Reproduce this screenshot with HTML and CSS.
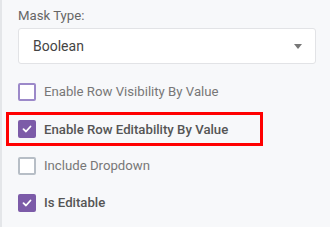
FILE: index.html
```html
<!DOCTYPE html>
<html>
<head>
<meta charset="utf-8">
<link rel="stylesheet" href="styles.css">
</head>
<body>
<div class="panel">
  <div class="field-label">Mask Type:</div>
  <div class="select">
    <span class="select-value">Boolean</span>
    <span class="caret"></span>
  </div>
  <div class="options">
    <div class="row">
      <span class="cb"></span>
      <span class="text">Enable Row Visibility By Value</span>
    </div>
    <div class="row">
      <div class="highlight">
        <span class="cb checked"><svg width="10" height="8" viewBox="0 0 10 8"><path d="M1.5 4.2 L4 6.5 L8.5 1.5" fill="none" stroke="#fff" stroke-width="1.8" stroke-linecap="round" stroke-linejoin="round"/></svg></span>
        <span class="text strong">Enable Row Editability By Value</span>
      </div>
    </div>
    <div class="row">
      <span class="cb grey"></span>
      <span class="text">Include Dropdown</span>
    </div>
    <div class="row">
      <span class="cb checked"><svg width="10" height="8" viewBox="0 0 10 8"><path d="M1.5 4.2 L4 6.5 L8.5 1.5" fill="none" stroke="#fff" stroke-width="1.8" stroke-linecap="round" stroke-linejoin="round"/></svg></span>
      <span class="text strong">Is Editable</span>
    </div>
  </div>
</div>
</body>
</html>
```
FILE: styles.css
```css
html, body {
  margin: 0;
  padding: 0;
}
body {
  width: 330px;
  height: 227px;
  background: #f7f8fa;
  border-left: 2px solid #e4e6e9;
  box-sizing: border-box;
  font-family: Roboto, "Noto Sans", sans-serif;
  overflow: hidden;
}
.panel {
  padding: 8px 14px 0 16px;
}
.field-label {
  font-size: 13.2px;
  line-height: 16px;
  color: #666;
}
.select {
  margin-top: 4px;
  height: 36px;
  box-sizing: border-box;
  background: #fff;
  border: 1px solid #e2e3e6;
  border-radius: 3px;
  display: flex;
  align-items: center;
  justify-content: space-between;
  padding: 0 13px 0 14px;
}
.select-value {
  font-size: 14px;
  color: #444;
}
.caret {
  width: 0;
  height: 0;
  border-left: 4px solid transparent;
  border-right: 4px solid transparent;
  border-top: 5px solid #777;
}
.options {
  margin-top: 9px;
}
.row {
  height: 37px;
  display: flex;
  align-items: center;
}
.highlight {
  margin-left: -12px;
  width: 257px;
  height: 34px;
  box-sizing: border-box;
  border: 3px solid #f00;
  padding-left: 9px;
  display: flex;
  align-items: center;
  margin-top: 1px;
}
.cb {
  width: 18px;
  height: 18px;
  box-sizing: border-box;
  border: 2px solid #9c89c9;
  border-radius: 2px;
  background: #fff;
  display: flex;
  align-items: center;
  justify-content: center;
  flex: none;
}
.cb.grey {
  border-color: #b7bec6;
}
.cb.checked {
  background: #7c5ba8;
  border-color: #7c5ba8;
}
.text {
  margin-left: 8px;
  font-size: 13.2px;
  color: #777;
}
.text.strong {
  color: #555;
  font-weight: 500;
}
```
